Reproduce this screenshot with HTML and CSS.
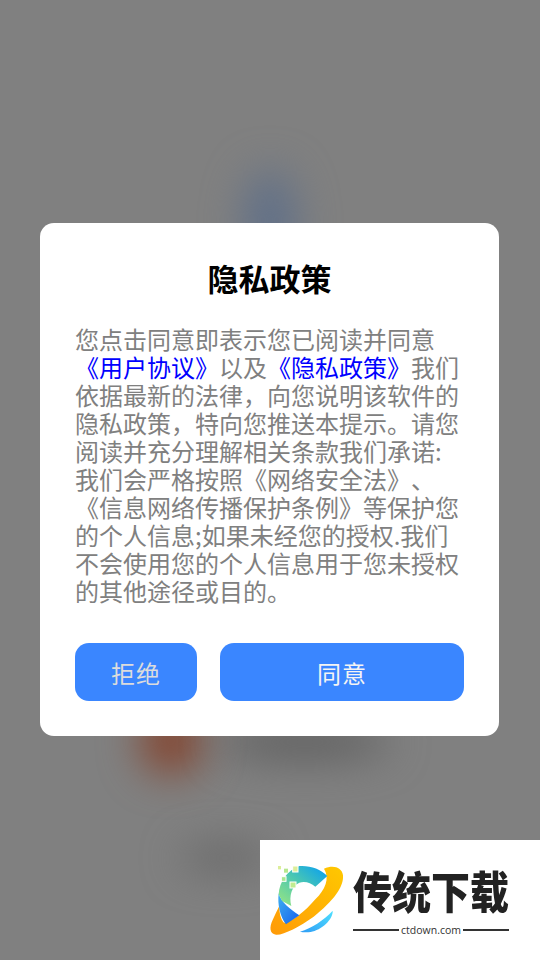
FILE: index.html
```html
<!DOCTYPE html>
<html lang="zh-CN">
<head>
<meta charset="utf-8">
<title>隐私政策</title>
<link rel="stylesheet" href="styles.css">
</head>
<body>
<div class="screen">
  <div class="blob blob-blue"></div>
  <div class="blob blob-red"></div>
  <div class="blob blob-dark"></div>
  <div class="blob blob-low"></div>
  <section class="dialog">
    <h1 class="title">隐私政策</h1>
    <p class="body">您点击同意即表示您已阅读并同意<a class="link">《用户协议》</a>以及<a class="link">《隐私政策》</a>我们依据最新的法律，向您说明该软件的隐私政策，特向您推送本提示。请您阅读并充分理解相关条款我们承诺:我们会严格按照《网络安全法》、《信息网络传播保护条例》等保护您的个人信息;如果未经您的授权.我们不会使用您的个人信息用于您未授权的其他途径或目的。</p>
    <div class="actions">
      <button class="btn btn-reject">拒绝</button>
      <button class="btn btn-agree">同意</button>
    </div>
  </section>
  <aside class="mark">
    <svg class="mark-logo" viewBox="0 0 270 270" aria-hidden="true">
      <defs>
        <linearGradient id="c1" x1="0.1" y1="0.9" x2="0.9" y2="0.1">
          <stop offset="0" stop-color="#8be08a"/>
          <stop offset="0.5" stop-color="#4cc8b0"/>
          <stop offset="1" stop-color="#12a5e8"/>
        </linearGradient>
        <linearGradient id="c2" x1="0" y1="0" x2="1" y2="1">
          <stop offset="0" stop-color="#3fb0f0"/>
          <stop offset="1" stop-color="#1560ee"/>
        </linearGradient>
        <linearGradient id="o1" x1="0" y1="1" x2="1" y2="0">
          <stop offset="0" stop-color="#ff9a08"/>
          <stop offset="1" stop-color="#ffc800"/>
        </linearGradient>
        <linearGradient id="b1" x1="0" y1="1" x2="1" y2="0">
          <stop offset="0" stop-color="#2f9cf5"/>
          <stop offset="1" stop-color="#4fe0ff"/>
        </linearGradient>
      </defs>
      <path fill="url(#o1)" d="M186 38C214 26 240 34 243 58C246 92 215 135 155 182C112 212 64 238 42 236C22 234 22 212 32 192C38 178 46 162 52 150C52 172 56 190 66 200C88 198 128 168 160 130C190 100 204 68 186 38Z"/>
      <path fill="url(#c2)" d="M50 112C58 140 84 160 112 178L72 205C54 182 46 145 50 112Z"/>
      <path fill="url(#c1)" d="M112 30C145 28 175 38 196 60L160 92C146 80 128 74 112 80C90 90 80 118 88 150L60 135L50 115C52 78 76 42 112 30Z"/>
      <path fill="url(#b1)" d="M212 164C214 190 178 222 146 228C134 230 122 229 114 227C150 216 186 192 212 164Z"/>
      <rect x="48" y="30" width="9" height="10" fill="#dcee9a"/>
      <rect x="66" y="38" width="12" height="12" fill="#b6e88e"/>
      <rect class="chip" x="92" y="30" width="16" height="18" fill="#dcee9a"/>
      <rect class="chip" x="58" y="62" width="14" height="14" fill="#a8e690"/>
      <rect class="chip" x="84" y="78" width="18" height="18" fill="#c0ec90"/>
    </svg>
    <div class="mark-text">
      <div class="mark-name">传统下载</div>
      <div class="mark-url"><span class="mark-rule"></span><span>ctdown.com</span><span class="mark-rule"></span></div>
    </div>
  </aside>
</div>
</body>
</html>
```
FILE: styles.css
```css
* { box-sizing: border-box; }
html, body { margin: 0; padding: 0; }
body { font-family: "Noto Sans CJK SC", "Noto Sans", sans-serif; }
.screen {
  position: relative;
  width: 540px;
  height: 960px;
  overflow: hidden;
  background: #808080;
  display: flex;
  align-items: flex-start;
  padding: 223px 0 0 40px;
}
.blob { position: absolute; border-radius: 50%; filter: blur(20px); }
.blob-blue { left: 244px; top: 170px; width: 52px; height: 100px; background: #5f6f88; }
.blob-red { left: 140px; top: 708px; width: 62px; height: 66px; background: #84442e; }
.blob-dark { left: 220px; top: 725px; width: 170px; height: 34px; background: #5e5e5e; }
.blob-low { left: 180px; top: 846px; width: 90px; height: 24px; background: #636363; }
.dialog {
  position: relative;
  width: 459px;
  height: 513px;
  background: #fff;
  border-radius: 14px;
  padding: 21px 35px 0;
}
.title {
  margin: 0;
  font-size: 31px;
  font-weight: 700;
  line-height: 68px;
  text-align: center;
  color: #000;
}
.body {
  margin: 13px 0 0;
  width: 385px;
  font-size: 24px;
  line-height: 28px;
  color: #808080;
  text-spacing-trim: space-all;
}
.link { color: #0000ff; }
.actions { display: flex; gap: 23px; margin-top: 38px; }
.btn {
  height: 58px;
  border: 0;
  border-radius: 14px;
  background: #3a86ff;
  font-family: inherit;
  font-size: 24px;
  letter-spacing: 1px;
  padding: 0;
}
.btn-reject { width: 122px; color: #dcdcdc; }
.btn-agree { width: 244px; color: #f4f4f4; }
.mark {
  position: absolute;
  right: 0;
  bottom: 0;
  width: 280px;
  height: 120px;
  background: #fff;
  display: flex;
  align-items: flex-start;
  padding: 16px 0 0 2px;
}
.mark-logo { width: 90px; height: 90px; flex: none; }
.chip { stroke: #fff; stroke-width: 3; }
.mark-text { margin: 10px 0 0 1px; width: 156px; }
.mark-name {
  font-size: 39px;
  font-weight: 900;
  line-height: 48px;
  color: #222;
  white-space: nowrap;
  transform: scaleY(1.14);
}
.mark-url {
  display: flex;
  align-items: center;
  gap: 2px;
  margin-top: 9px;
  font-family: "Open Sans", sans-serif;
  font-size: 10.5px;
  line-height: 14px;
  color: #333;
}
.mark-rule { flex: 1; height: 2px; background: #333; }
```
